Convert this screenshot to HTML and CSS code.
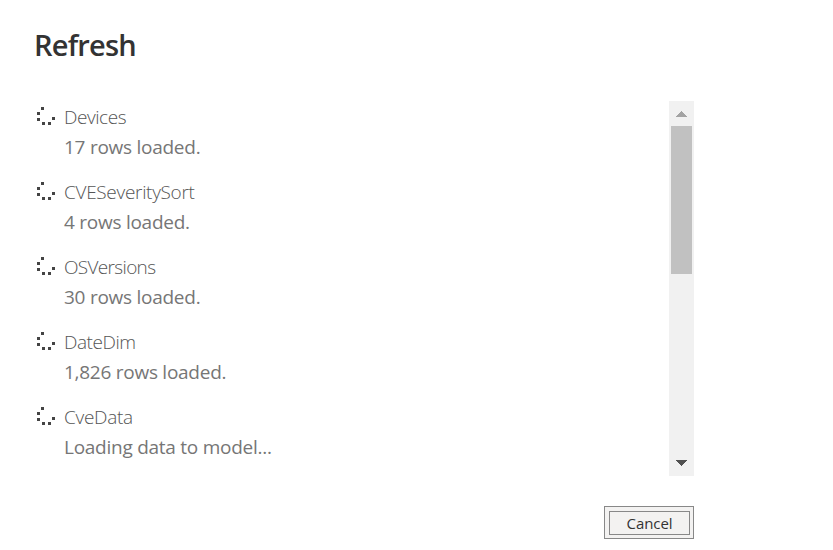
FILE: index.html
```html
<!DOCTYPE html>
<html lang="en">
<head><meta charset="utf-8"><title>Refresh</title><link rel="stylesheet" href="styles.css"></head>
<body>
<main class="dialog">
<h1 class="title">Refresh</h1>
<section class="panel">
<ul class="list">
<li class="item"><svg class="spinner" viewBox="0 0 18 18"><use href="#dots"/></svg><div><p class="name">Devices</p><p class="status">17 rows loaded.</p></div></li>
<li class="item"><svg class="spinner" viewBox="0 0 18 18"><use href="#dots"/></svg><div><p class="name loose">CVESeveritySort</p><p class="status">4 rows loaded.</p></div></li>
<li class="item"><svg class="spinner" viewBox="0 0 18 18"><use href="#dots"/></svg><div><p class="name tight">OSVersions</p><p class="status">30 rows loaded.</p></div></li>
<li class="item"><svg class="spinner" viewBox="0 0 18 18"><use href="#dots"/></svg><div><p class="name">DateDim</p><p class="status">1,826 rows loaded.</p></div></li>
<li class="item"><svg class="spinner" viewBox="0 0 18 18"><use href="#dots"/></svg><div><p class="name loose">CveData</p><p class="status">Loading data to model...</p></div></li>
</ul>
<div class="scrollbar"><svg class="arrow" viewBox="0 0 25 25"><path d="M7 16L12.5 10L18 16Z" fill="#a3a3a3"/></svg><div class="thumb"></div><svg class="arrow bottom" viewBox="0 0 25 25"><path d="M7 9L12.5 15L18 9Z" fill="#505050"/></svg></div>
</section>
<footer class="actions"><button class="cancel"><span>Cancel</span></button></footer>
</main>
<svg class="defs"><defs><g id="dots" fill="#444"><path d="M4 0h3v3H4zM0 5h3v3H0zM0 11h3v3H0zM5 15h3v3H5zM11 15h3v3h-3zM15 10h3v3h-3z"/></g></defs></svg>
</body>
</html>
```
FILE: styles.css
```css
* { box-sizing: border-box; }
body { margin: 0; background: #fff; font-family: "Open Sans", sans-serif; overflow: hidden; }
.dialog { width: 694px; height: 550px; padding: 25px 0 0 35px; }
.title { margin: 0 0 0 -1px; height: 76px; font-size: 29px; line-height: 40px; font-weight: 600; color: #333; letter-spacing: -.8px; }
.panel { display: flex; justify-content: space-between; height: 375px; }
.list { list-style: none; margin: 0; padding: 0; }
.item { display: flex; height: 75px; }
.spinner { width: 18px; height: 18px; margin: 6px 9px 0 2px; shape-rendering: crispEdges; }
.name, .status { margin: 0; height: 30px; line-height: 32px; font-size: 19px; white-space: nowrap; }
.name { font-weight: 300; color: #555; letter-spacing: -.45px; }
.loose { letter-spacing: -.31px; }
.tight { letter-spacing: -.67px; }
.status { color: #767676; letter-spacing: -.26px; }
.scrollbar { width: 25px; background: #f1f1f1; display: flex; flex-direction: column; }
.arrow { width: 25px; height: 25px; shape-rendering: crispEdges; }
.bottom { margin-top: auto; }
.thumb { height: 148px; margin: 0 2px; background: #c1c1c1; }
.actions { display: flex; justify-content: flex-end; padding-top: 30px; }
.cancel { width: 90px; height: 33px; padding: 4px 3px 3px 4px; border: 1px solid #888; background: #f3f2f1; font: 15px/23px "Open Sans", sans-serif; letter-spacing: -.1px; color: #333; }
.cancel span { display: block; height: 24px; border: 1px solid #888; }
.defs { display: none; }
```
